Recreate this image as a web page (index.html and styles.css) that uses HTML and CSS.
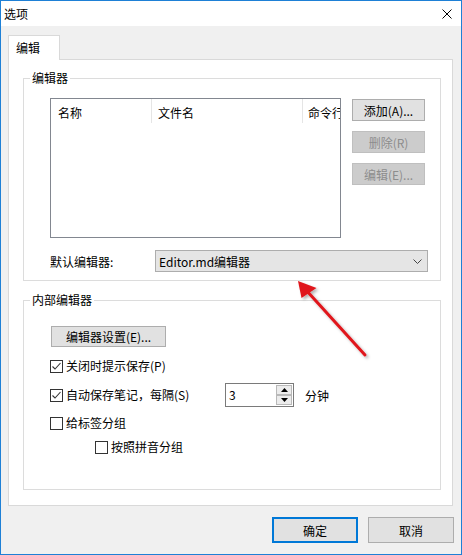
FILE: index.html
```html
<!DOCTYPE html>
<html lang="zh-CN">
<head>
    <meta charset="UTF-8">
    <meta name="viewport" content="width=device-width, initial-scale=1.0">
    <title>选项</title>
    <link rel="stylesheet" href="styles.css">
</head>
<body>
    <div class="window">
        <div class="titlebar">
            <span class="title">选项</span>
            <svg class="close" width="10" height="10" viewBox="0 0 10 10">
                <path d="M0.5 0.5 L9.5 9.5 M9.5 0.5 L0.5 9.5" stroke="#000" stroke-width="1" fill="none"/>
            </svg>
        </div>
        <div class="content">
            <div class="tabs">
                <div class="tab active">编辑</div>
            </div>
            <div class="panel">
                <fieldset class="group">
                    <legend>编辑器</legend>
                    <div class="group-body editor-body">
                        <div class="editor-row">
                            <div class="listview">
                                <div class="list-header">
                                    <div class="col col-name">名称</div>
                                    <div class="col col-file">文件名</div>
                                    <div class="col col-cmd">命令行</div>
                                </div>
                            </div>
                            <div class="side-buttons">
                                <button class="btn side-btn">添加(A)...</button>
                                <button class="btn side-btn" disabled>删除(R)</button>
                                <button class="btn side-btn" disabled>编辑(E)...</button>
                            </div>
                        </div>
                        <div class="default-row">
                            <span class="default-label">默认编辑器:</span>
                            <div class="combo">
                                <span>Editor.md编辑器</span>
                                <svg width="9" height="5" viewBox="0 0 9 5">
                                    <path d="M0.5 0.5 L4.5 4.5 L8.5 0.5" stroke="#444" stroke-width="1" fill="none"/>
                                </svg>
                            </div>
                        </div>
                    </div>
                </fieldset>

                <fieldset class="group internal">
                    <legend>内部编辑器</legend>
                    <div class="group-body internal-body">
                        <button class="btn settings-btn">编辑器设置(E)...</button>
                        <div class="check row-close">
                            <span class="box checked"><svg width="11" height="11" viewBox="0 0 11 11"><path d="M1.5 5.5 L4 8 L9.5 2" stroke="#333" stroke-width="1.1" fill="none"/></svg></span>
                            <span>关闭时提示保存(P)</span>
                        </div>
                        <div class="autosave-row">
                            <div class="check autosave-check">
                                <span class="box checked"><svg width="11" height="11" viewBox="0 0 11 11"><path d="M1.5 5.5 L4 8 L9.5 2" stroke="#333" stroke-width="1.1" fill="none"/></svg></span>
                                <span>自动保存笔记，每隔(S)</span>
                            </div>
                            <div class="spin">
                                <span class="spin-value">3</span>
                                <div class="spin-buttons">
                                    <div class="spin-btn"><svg width="7" height="4" viewBox="0 0 7 4"><path d="M0 4 L3.5 0 L7 4 Z" fill="#000"/></svg></div>
                                    <div class="spin-btn"><svg width="7" height="4" viewBox="0 0 7 4"><path d="M0 0 L3.5 4 L7 0 Z" fill="#000"/></svg></div>
                                </div>
                            </div>
                            <span class="unit">分钟</span>
                        </div>
                        <div class="check row-tags">
                            <span class="box"></span>
                            <span>给标签分组</span>
                        </div>
                        <div class="check row-pinyin">
                            <span class="box"></span>
                            <span>按照拼音分组</span>
                        </div>
                    </div>
                </fieldset>
            </div>
            <div class="footer">
                <button class="btn footer-btn default">确定</button>
                <button class="btn footer-btn">取消</button>
            </div>
        </div>

        <svg class="arrow" width="462" height="555" viewBox="0 0 462 555">
            <defs>
                <filter id="shadow" x="-20%" y="-20%" width="140%" height="140%">
                    <feDropShadow dx="2" dy="2" stdDeviation="1.5" flood-color="#000" flood-opacity="0.3"/>
                </filter>
            </defs>
            <g filter="url(#shadow)">
                <line x1="365" y1="355" x2="306" y2="290" stroke="#e0161b" stroke-width="3" stroke-linecap="round"/>
                <polygon points="298,281 301.5,298 316.5,288" fill="#e0161b"/>
            </g>
        </svg>
    </div>
</body>
</html>
```

FILE: styles.css
```css
* {
    box-sizing: border-box;
}

body {
    margin: 0;
    font-family: "Noto Sans CJK SC", "Microsoft YaHei", sans-serif;
    font-size: 12px;
    color: #000;
    background-color: #f0f0f0;
}

.window {
    position: relative;
    width: 462px;
    height: 555px;
    border: 1px solid #1e80d6;
    background-color: #f0f0f0;
}

.titlebar {
    display: flex;
    align-items: center;
    justify-content: space-between;
    height: 25px;
    padding: 0 9px 0 3px;
    background-color: #fff;
}

.title {
    line-height: 25px;
}

.content {
    padding: 9px 7px 0 7px;
}

.tabs {
    display: flex;
}

.tab {
    position: relative;
    z-index: 1;
    width: 52px;
    height: 25px;
    margin-bottom: -1px;
    padding-left: 7px;
    line-height: 23px;
    background-color: #fff;
    border: 1px solid #d9d9d9;
    border-bottom: none;
}

.panel {
    width: 445px;
    height: 447px;
    padding: 10px 11px 0 14px;
    background-color: #fff;
    border: 1px solid #d9d9d9;
}

.group {
    margin: 0;
    padding: 0;
    min-width: 0;
    border: 1px solid #dcdcdc;
}

.group legend {
    margin-left: 6px;
    padding: 0 2px;
    line-height: 16px;
}

.group-body {
    padding-left: 26px;
}

.editor-body {
    padding-top: 12px;
    padding-bottom: 8px;
}

.editor-row {
    display: flex;
    gap: 11px;
}

.listview {
    width: 291px;
    height: 140px;
    overflow: hidden;
    background-color: #fff;
    border: 1px solid #828790;
}

.list-header {
    display: flex;
    height: 24px;
}

.col {
    flex: none;
    height: 24px;
    padding: 4px 0 0 6px;
    line-height: 20px;
    white-space: nowrap;
    overflow: hidden;
    border-right: 1px solid #e5e5e5;
}

.col-name {
    width: 101px;
    padding-left: 7px;
}

.col-file {
    width: 151px;
}

.col-cmd {
    width: 60px;
    padding-left: 5px;
    border-right: none;
}

.side-buttons {
    display: flex;
    flex-direction: column;
    gap: 10px;
    margin-top: 1px;
}

.btn {
    font-family: inherit;
    font-size: 12px;
    color: #000;
    padding: 0;
    background-color: #e1e1e1;
    border: 1px solid #adadad;
    border-radius: 0;
}

.btn:disabled {
    color: #8d8d8d;
    background-color: #cccccc;
    border-color: #bfbfbf;
}

.side-btn {
    width: 73px;
    height: 22px;
}

.default-row {
    display: flex;
    align-items: center;
    margin-top: 12px;
}

.default-label {
    width: 105px;
}

.combo {
    display: flex;
    align-items: center;
    justify-content: space-between;
    width: 273px;
    height: 22px;
    padding: 0 5px 0 3px;
    background-color: #e5e5e5;
    border: 1px solid #adadad;
}

.internal {
    margin-top: 11px;
}

.internal-body {
    padding-top: 18px;
    padding-bottom: 34px;
}

.settings-btn {
    display: block;
    width: 115px;
    height: 21px;
    margin-left: 1px;
}

.check {
    display: flex;
    align-items: center;
    gap: 3px;
    height: 16px;
    line-height: 16px;
}

.box {
    display: flex;
    align-items: center;
    justify-content: center;
    width: 13px;
    height: 13px;
    background-color: #fff;
    border: 1px solid #333;
}

.row-close {
    margin-top: 11px;
}

.autosave-row {
    display: flex;
    align-items: center;
    height: 24px;
    margin-top: 9px;
}

.autosave-check {
    width: 175px;
}

.spin {
    display: flex;
    width: 69px;
    height: 24px;
    background-color: #fff;
    border: 1px solid #7a7a7a;
}

.spin-value {
    flex: 1;
    padding-left: 3px;
    line-height: 21px;
}

.spin-buttons {
    display: flex;
    flex-direction: column;
    width: 16px;
    margin: 1px;
}

.spin-btn {
    display: flex;
    align-items: center;
    justify-content: center;
    flex: 1;
    background-color: #ececec;
    border: 1px solid #b9b9b9;
}

.unit {
    margin-left: 11px;
}

.row-tags {
    margin-top: 8px;
}

.row-pinyin {
    margin-top: 8px;
    padding-left: 45px;
}

.footer {
    display: flex;
    justify-content: flex-end;
    gap: 10px;
    margin-top: 11px;
}

.footer-btn {
    width: 86px;
    height: 26px;
}

.footer-btn.default {
    border: 2px solid #0078d7;
}

.arrow {
    position: absolute;
    left: -1px;
    top: -1px;
    pointer-events: none;
}
```
